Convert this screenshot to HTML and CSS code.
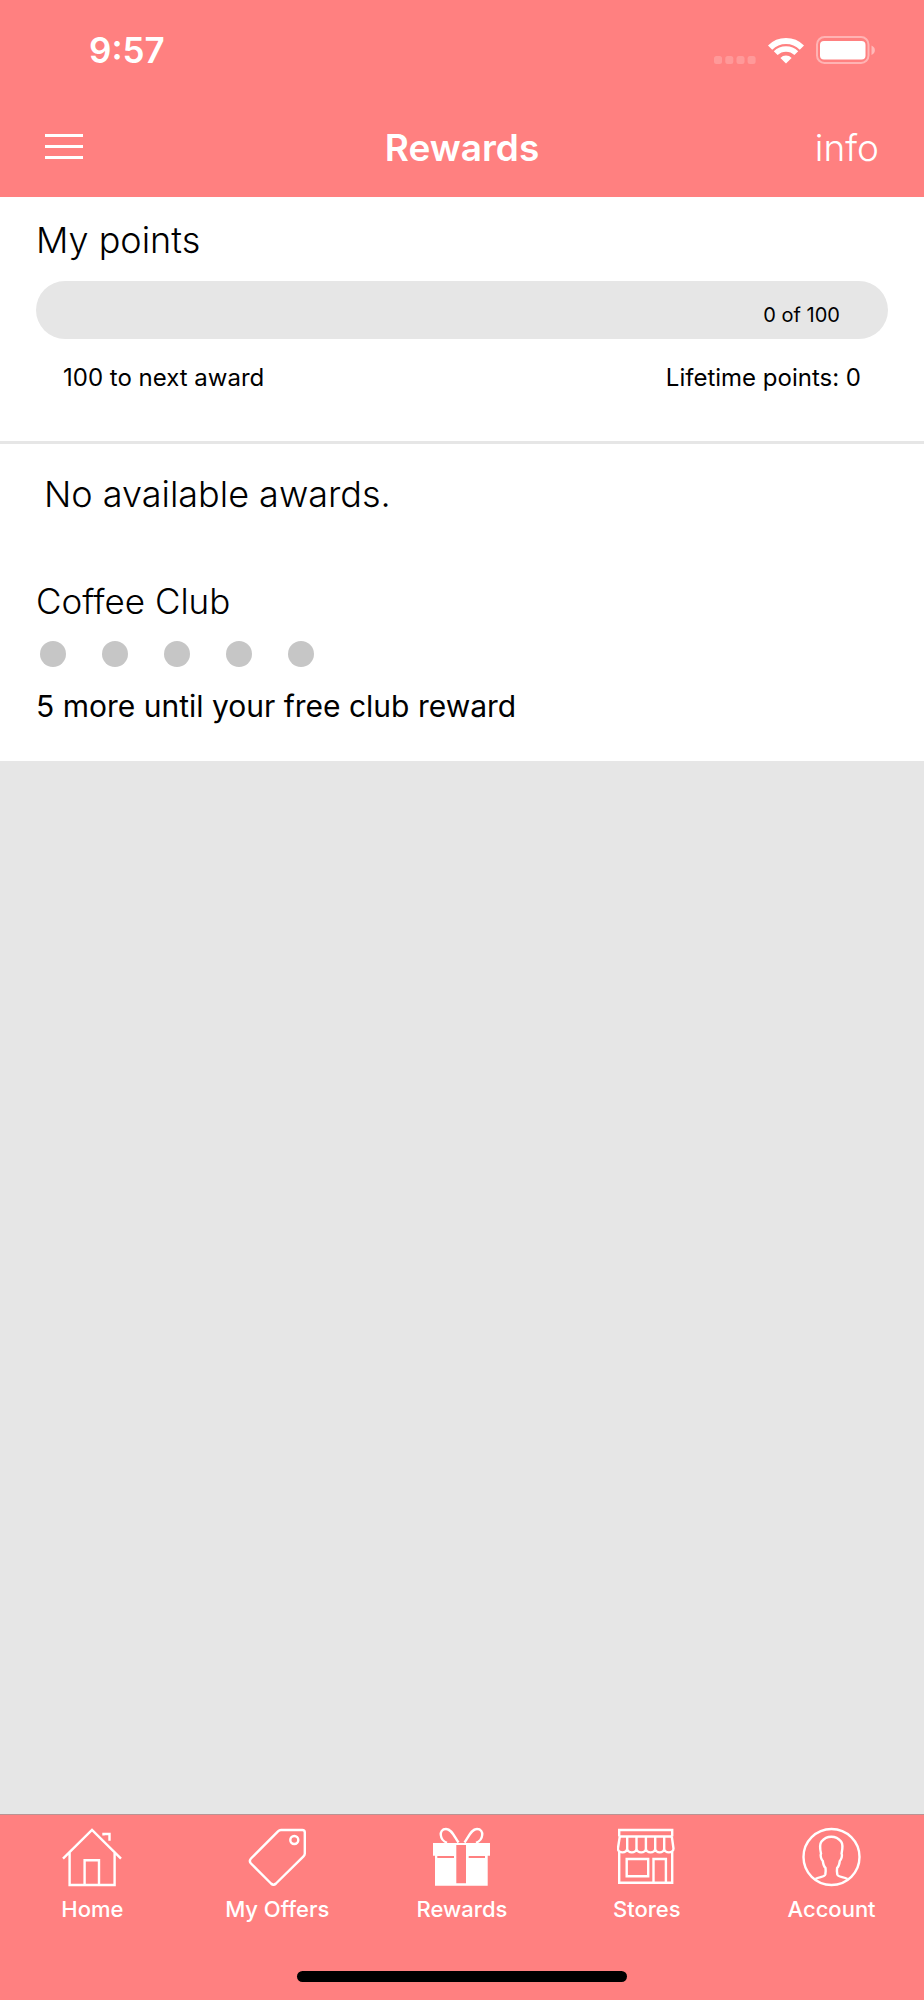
FILE: index.html
```html
<!DOCTYPE html>
<html lang="en">
	<head>
		<meta charset="utf-8">
		<meta name="viewport" content="width=device-width, initial-scale=1">
		<title>Rewards</title>
		<link rel="stylesheet" href="styles.css">
	</head>
	<body>
		<header class="header">
			<div class="status">
				<span class="time">9:57</span>
				<div class="status-icons">
					<svg width="42" height="28" viewBox="0 0 42 28" fill="#fff" opacity="0.2">
						<rect x="0" y="20" width="8" height="8" rx="2.5"/>
						<rect x="11.3" y="20" width="8" height="8" rx="2.5"/>
						<rect x="22.5" y="20" width="8" height="8" rx="2.5"/>
						<rect x="33.6" y="20" width="8" height="8" rx="2.5"/>
					</svg>
					<svg width="36" height="28" viewBox="0 0 36 28" fill="none" stroke="#fff">
						<path d="M2.1 11.6A22.5 22.5 0 0 1 33.9 11.6" stroke-width="6"/>
						<path d="M7.7 17.2A14.6 14.6 0 0 1 28.3 17.2" stroke-width="5.4"/>
						<path d="M12.4 21.9A8 8 0 0 1 23.6 21.9L18 27.5z" fill="#fff" stroke="none"/>
					</svg>
					<svg width="60" height="28" viewBox="0 0 60 28">
						<rect x="1" y="1" width="51.5" height="26" rx="7.5" fill="none" stroke="#fff" stroke-width="2" opacity="0.4"/>
						<rect x="4" y="5" width="45.5" height="18.5" rx="4" fill="#fff"/>
						<path d="M55.5 9.5C60 11.5 60 17 55.5 19z" fill="#fff" opacity="0.45"/>
					</svg>
				</div>
			</div>
			<div class="topbar">
				<button class="menu" type="button" aria-label="Menu"><span></span><span></span><span></span></button>
				<h1 class="title">Rewards</h1>
				<button class="info" type="button">info</button>
			</div>
		</header>

		<main class="main">
			<section class="points">
				<h2 class="heading">My points</h2>
				<div class="bar"><span class="bar-text">0 of 100</span></div>
				<div class="points-row">
					<span>100 to next award</span>
					<span>Lifetime points: 0</span>
				</div>
			</section>
			<section class="awards">
				<p class="no-awards">No available awards.</p>
				<h2 class="club-name">Coffee Club</h2>
				<div class="dots"><i></i><i></i><i></i><i></i><i></i></div>
				<p class="club-text">5 more until your free club reward</p>
			</section>
		</main>

		<footer class="footer">
			<nav class="tabs">
				<a class="tab" href="#home">
					<svg viewBox="0 0 60 60">
						<path d="M1 31.7L30 3L59 31.7M41.5 8.5V7H47.5V13.8M7.6 25V58H52.6V25M22.6 58V33.3H37V58"/>
					</svg>
					<span>Home</span>
				</a>
				<a class="tab" href="#offers">
					<svg viewBox="0 0 60 60">
						<path d="M34 3H55.3Q57.8 3 57.8 5.5V26.5Q57.8 28 56.5 29.3L29 56.5Q26.5 58.8 24 56.5L4 36.5Q1.7 34 4 31.5L31 4.3Q32.3 3 34 3z"/>
						<circle cx="47.3" cy="13" r="4"/>
					</svg>
					<span>My Offers</span>
				</a>
				<a class="tab" href="#rewards" aria-current="page">
					<svg viewBox="0 0 60 60">
						<path d="M26.5 15.5C22 9 19.5 2 14 2C10 2 8.5 5 8.8 8C9.1 11.5 11.5 14.5 15 15.8M32.5 15.5C37 9 39.5 2 45 2C49 2 50.5 5 50.2 8C49.9 11.5 47.5 14.5 44 15.8"/>
						<path class="solid" d="M1 16H58V28.7H55.7V58.7H3V28.7H1zM24.3 18V56.3H34V18zM5.3 29V31H22V29zM36.7 29V31H53V29z"/>
					</svg>
					<span>Rewards</span>
				</a>
				<a class="tab" href="#stores">
					<svg viewBox="0 0 60 60">
						<path d="M2.2 9.5V3H55.2V9.5M2.2 9.5H55.2M2.2 25V55.7H55.2V25"/>
						<path d="M2.8 9.5L.9 21.5C.9 26.6 10.2 26.6 10.2 21.5C10.2 26.6 19.5 26.6 19.5 21.5C19.5 26.6 28.9 26.6 28.9 21.5C28.9 26.6 38.2 26.6 38.2 21.5C38.2 26.6 47.2 26.6 47.2 21.5C47.2 26.6 56.5 26.6 56.5 21.5L54.8 9.5M10.2 9.5V22M19.5 9.5V22M28.9 9.5V22M38.2 9.5V22M47.2 9.5V22"/>
						<path d="M9.7 32H31.2V49.3H9.7zM36.5 55.7V32H48.9V55.7"/>
					</svg>
					<span>Stores</span>
				</a>
				<a class="tab" href="#account">
					<svg viewBox="0 0 60 60">
						<circle cx="29.5" cy="30" r="28"/>
						<path d="M13.500 52C17 49.500 22.500 50.500 23.300 47.500Q24 44 23.500 41C21.800 39.500 21.200 37 20.800 34C19.300 32.500 18 28.500 19 26.500C17.500 20 18 16.500 19.500 14.500C22 11.500 25 9.800 29.300 9.800C33.600 9.800 36.600 11.500 39.100 14.500C40.600 16.500 41 20 39.600 26.500C40.600 28.500 39.300 32.500 37.800 34C37.400 37 36.800 39.500 35.100 41Q34.600 44 35.300 47.500C36.100 50.500 41.600 49.500 45.500 52"/>
					</svg>
					<span>Account</span>
				</a>
			</nav>
			<div class="home-line"></div>
		</footer>
	</body>
</html>
```

FILE: styles.css
```css
* {
	margin: 0;
	padding: 0;
	box-sizing: border-box;
}

body {
	display: flex;
	flex-direction: column;
	min-height: 100vh;
	background-color: #e6e6e6;
	font-family: Inter, "Liberation Sans", sans-serif;
	color: #000;
}

h1,
h2 {
	font-weight: 400;
}

button {
	border: 0;
	background: none;
	color: inherit;
	font-family: inherit;
	cursor: pointer;
}

/* header */
.header {
	background-color: #ff8080;
	color: #fff;
}

.status {
	display: flex;
	justify-content: space-between;
	align-items: center;
	height: 98px;
	padding: 2px 48px 0 89px;
}

.time {
	font-size: 35px;
	line-height: 44px;
	font-weight: 600;
}

.status-icons {
	display: flex;
	gap: 12px;
}

.topbar {
	display: grid;
	grid-template-columns: 1fr auto 1fr;
	align-items: center;
	height: 99px;
	padding: 0 45px;
}

.menu {
	display: flex;
	flex-direction: column;
	gap: 8px;
	justify-self: start;
	padding-bottom: 3px;
}

.menu span {
	width: 38px;
	height: 3px;
	background-color: #fff;
}

.title {
	font-size: 37px;
	line-height: 44px;
	font-weight: 600;
}

.info {
	justify-self: end;
	font-size: 37px;
	line-height: 44px;
	font-weight: 300;
}

/* points */
.main {
	flex: 1;
}

.points {
	padding: 21px 36px 48px;
	border-bottom: 3px solid #e6e6e6;
	background-color: #fff;
}

.heading {
	font-size: 36px;
	line-height: 44px;
	font-weight: 300;
}

.bar {
	display: flex;
	justify-content: flex-end;
	align-items: center;
	height: 58px;
	margin-top: 19px;
	padding: 10px 48px 0;
	border-radius: 29px;
	background-color: #e6e6e6;
}

.bar-text {
	font-size: 20px;
	line-height: 28px;
}

.points-row {
	display: flex;
	justify-content: space-between;
	margin-top: 24px;
	padding: 0 27px;
	font-size: 24px;
	line-height: 30px;
}

/* awards */
.awards {
	padding: 28px 36px 37px;
	background-color: #fff;
}

.no-awards {
	padding: 0 8px;
	font-size: 36px;
	line-height: 44px;
	font-weight: 300;
}

.club-name {
	margin-top: 63px;
	font-size: 35px;
	line-height: 44px;
	font-weight: 300;
}

.dots {
	display: flex;
	gap: 36px;
	margin-top: 18px;
	padding: 0 4px;
}

.dots i {
	width: 26px;
	height: 26px;
	border-radius: 50%;
	background-color: #c6c6c6;
}

.club-text {
	margin-top: 21px;
	font-size: 30px;
	line-height: 36px;
}

/* bottom tabs */
.footer {
	padding-bottom: 18px;
	border-top: 1px solid #b99393;
	background-color: #ff8080;
}

.tabs {
	display: grid;
	grid-template-columns: repeat(5, 1fr);
	padding-top: 12px;
}

.tab {
	display: flex;
	flex-direction: column;
	align-items: center;
	gap: 8px;
	font-size: 22px;
	line-height: 28px;
	font-weight: 500;
	color: #fff;
	text-decoration: none;
}

.tab svg {
	width: 60px;
	height: 60px;
	fill: none;
	stroke: #fff;
	stroke-width: 2.4;
}

.tab .solid {
	fill: #fff;
	fill-rule: evenodd;
	stroke: none;
}

.home-line {
	width: 330px;
	height: 11px;
	margin: 48px auto 0;
	border-radius: 6px;
	background-color: #000;
}
```
